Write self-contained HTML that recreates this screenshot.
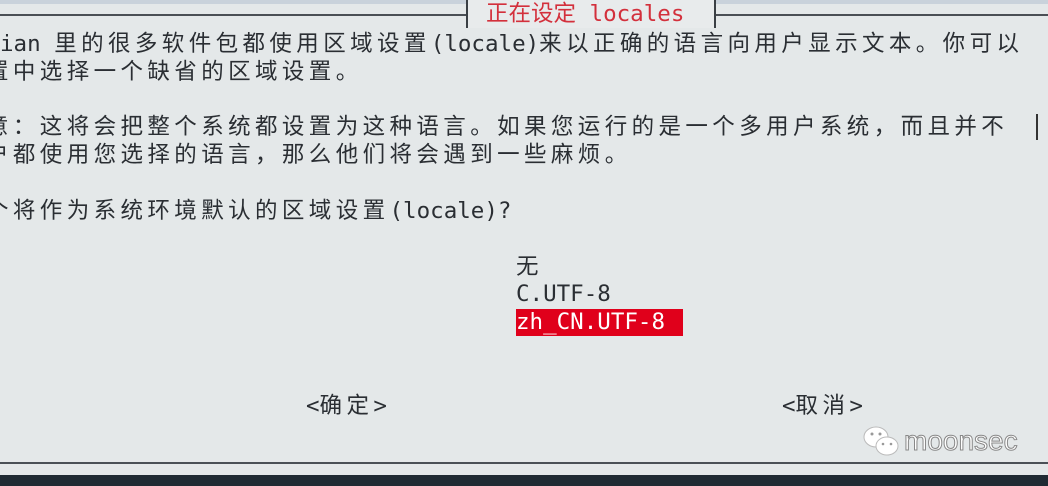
<!DOCTYPE html>
<html><head><meta charset="utf-8"><style>
html,body{margin:0;padding:0}
body{width:1048px;height:486px;overflow:hidden;background:#e4e8e9;position:relative;font-family:"DejaVu Sans Mono","Noto Sans CJK SC",monospace;font-size:22.5px;color:#2a2e33}
.t{position:absolute;white-space:pre;line-height:28px}
.c{letter-spacing:4.4px}
.top{position:absolute;left:0;top:0;width:1048px;height:4px;background:#c9d2db}
.hl{position:absolute;left:0;top:14px;width:1048px;height:2px;background:#4a4f55}
.box{position:absolute;left:466px;top:-2px;width:246px;height:30px;border-left:2px solid #3a3f44;border-right:2px solid #3a3f44;background:#e8ebec}
.bot{position:absolute;left:0;top:462px;width:1048px;height:2px;background:#4a5056}
.dark{position:absolute;left:0;top:475px;width:1048px;height:11px;background:#1f2a33}
.cursor{position:absolute;left:1036px;top:114px;width:2px;height:26px;background:#333}
</style></head><body>
<div class="top"></div>
<div class="hl"></div>
<div class="box"></div>
<div class="t" style="left:486px;top:0;color:#d3303c">正在设定 locales</div>
<div class="t" style="left:0;top:30px">ian <span class="c">里的很多软件包都使用区域设置</span>(locale)<span class="c">来以正确的语言向用户显示文本。你可以</span></div>
<div class="t" style="left:-14px;top:58px"><span class="c">置中选择一个缺省的区域设置。</span></div>
<div class="t" style="left:-14px;top:113px"><span class="c">意：这将会把整个系统都设置为这种语言。如果您运行的是一个多用户系统，而且并不</span></div>
<div class="t" style="left:-14px;top:141px"><span class="c">户都使用您选择的语言，那么他们将会遇到一些麻烦。</span></div>
<div class="cursor"></div>
<div class="t" style="left:-14px;top:197px"><span class="c">个将作为系统环境默认的区域设置</span>(locale)?</div>
<div class="t" style="left:516px;top:253px">无</div>
<div class="t" style="left:516px;top:280px">C.UTF-8</div>
<div style="position:absolute;left:516px;top:309px;width:167px;height:27px;background:#e0001b"></div>
<div class="t" style="left:516px;top:308px;color:#fff">zh_CN.UTF-8</div>
<div class="t" style="left:306px;top:392px">&lt;<span class="c">确定</span>&gt;</div>
<div class="t" style="left:782px;top:392px">&lt;<span class="c">取消</span>&gt;</div>
<svg style="position:absolute;left:862px;top:425px" width="40" height="34" viewBox="0 0 40 34">
<ellipse cx="14" cy="12" rx="12" ry="10" fill="#fff" stroke="#bbb"/>
<ellipse cx="25" cy="21" rx="11" ry="9" fill="#fff" stroke="#bbb"/>
<circle cx="10" cy="9" r="1.5" fill="#999"/><circle cx="18" cy="9" r="1.5" fill="#999"/>
<circle cx="21" cy="19" r="1.3" fill="#999"/><circle cx="29" cy="19" r="1.3" fill="#999"/>
</svg>
<div class="t" style="left:904px;top:427px;font-family:'Liberation Sans',sans-serif;font-size:28px;color:#fff;-webkit-text-stroke:1px #888">moonsec</div>
<div class="bot"></div>
<div class="dark"></div>
</body></html>
